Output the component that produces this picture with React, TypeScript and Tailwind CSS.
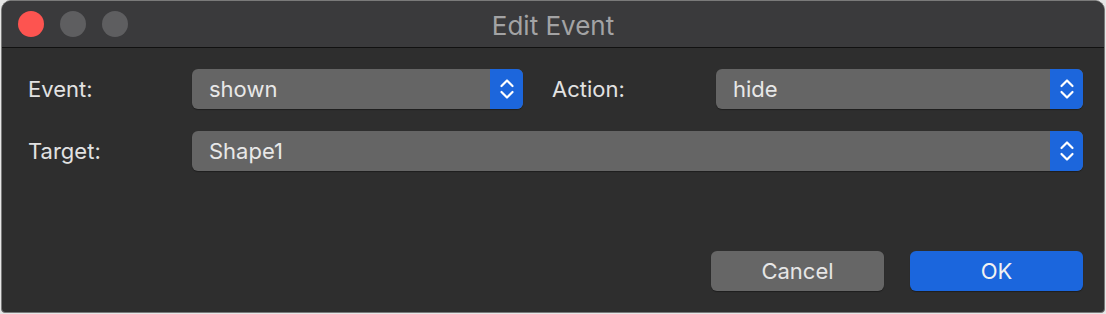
import React from "react";

const Chevrons = () => (
  <svg width="16" height="24" viewBox="0 0 16 24" fill="none">
    <path d="M2.5 9 L8 3.5 L13.5 9" stroke="#ffffff" strokeWidth="2.2" strokeLinecap="round" strokeLinejoin="round" />
    <path d="M2.5 15 L8 20.5 L13.5 15" stroke="#ffffff" strokeWidth="2.2" strokeLinecap="round" strokeLinejoin="round" />
  </svg>
);

const Select = ({ value, className }: { value: string; className: string }) => (
  <div className={`flex h-[40px] rounded-[6px] overflow-hidden bg-[#656565] shadow-[0_1px_1px_rgba(0,0,0,0.35)] ${className}`}>
    <div className="flex-1 flex items-center pl-[17px] text-[22px] text-[#e8e8e8]">{value}</div>
    <div className="w-[33px] bg-[#1c66dc] flex items-center justify-center">
      <Chevrons />
    </div>
  </div>
);

const App = () => {
  return (
    <div className="w-[1106px] h-[314px] bg-[#e6e6e6] font-['Inter','Liberation_Sans',sans-serif]">
      <div className="ml-[1px] w-[1104px] h-[313px] rounded-t-[10px] rounded-b-[4px] border border-[#7a7a7a] overflow-hidden flex flex-col bg-[#2e2e2e]">
        <div className="relative h-[47px] bg-[#3a3a3c] border-b border-[#111111] flex items-center">
          <div className="flex gap-[16px] pl-[16px]">
            <span className="w-[26px] h-[26px] rounded-full bg-[#fd5450]" />
            <span className="w-[26px] h-[26px] rounded-full bg-[#5e5e60]" />
            <span className="w-[26px] h-[26px] rounded-full bg-[#5e5e60]" />
          </div>
          <div className="absolute inset-0 flex items-center justify-center text-[26px] text-[#a3a3a4] pt-[2px]">
            Edit Event
          </div>
        </div>
        <div className="flex-1 pl-[26px] pr-[21px] pt-[21px] flex flex-col">
          <div className="flex items-center">
            <div className="w-[164px] text-[22px] text-[#e2e2e2]">Event:</div>
            <Select value="shown" className="w-[331px]" />
            <div className="w-[164px] ml-[29px] text-[22px] text-[#e2e2e2]">Action:</div>
            <Select value="hide" className="flex-1" />
          </div>
          <div className="flex items-center mt-[22px]">
            <div className="w-[164px] text-[22px] text-[#e2e2e2]">Target:</div>
            <Select value="Shape1" className="flex-1" />
          </div>
          <div className="flex justify-end gap-[26px] mt-[80px]">
            <button className="w-[173px] h-[40px] rounded-[6px] bg-[#666666] text-[22px] text-[#e6e6e6] shadow-[0_1px_1px_rgba(0,0,0,0.35)]">
              Cancel
            </button>
            <button className="w-[173px] h-[40px] rounded-[6px] bg-[#1b66dd] text-[22px] text-[#f2f2f2] shadow-[0_1px_1px_rgba(0,0,0,0.35)]">
              OK
            </button>
          </div>
        </div>
      </div>
    </div>
  );
};

export default App;
